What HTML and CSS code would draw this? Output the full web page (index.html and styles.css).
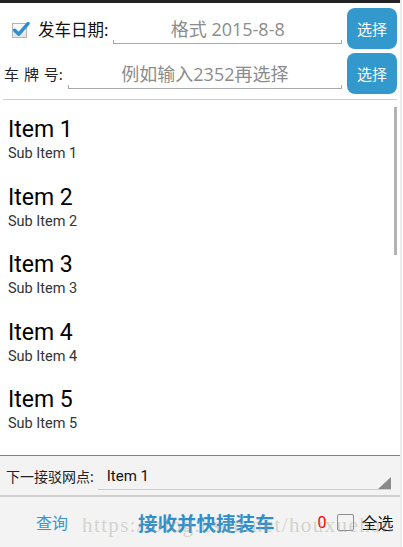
FILE: index.html
```html
<!DOCTYPE html>
<html lang="zh-CN">
<head>
    <meta charset="UTF-8">
    <meta name="viewport" content="width=device-width, initial-scale=1.0">
    <title>快捷装车</title>
    <link rel="stylesheet" href="styles.css">
</head>
<body>
    <div class="screen">
        <div class="statusbar"></div>

        <div class="form-row first-row">
            <svg class="check-icon" width="20" height="20" viewBox="0 0 20 20">
                <defs>
                    <linearGradient id="boxFill" x1="0" y1="0" x2="0" y2="1">
                        <stop offset="0" stop-color="#ffffff"/>
                        <stop offset="1" stop-color="#e2e2e2"/>
                    </linearGradient>
                </defs>
                <rect x="2.5" y="4.5" width="14" height="14" fill="url(#boxFill)" stroke="#b4b4b4" stroke-width="1"/>
                <path d="M4.6 11.2 L8.8 15.2 L18 4.6" fill="none" stroke="#2a8fd3" stroke-width="3.4" stroke-linecap="round" stroke-linejoin="round"/>
            </svg>
            <span class="row-label">发车日期:</span>
            <div class="field">
                <span class="placeholder">格式 2015-8-8</span>
                <div class="field-line"></div>
            </div>
            <button class="pick-btn">选择</button>
        </div>

        <div class="form-row second-row">
            <span class="row-label small">车 牌 号:</span>
            <div class="field">
                <span class="placeholder">例如输入2352再选择</span>
                <div class="field-line"></div>
            </div>
            <button class="pick-btn">选择</button>
        </div>

        <div class="divider"></div>

        <div class="list-wrap">
            <ul class="item-list">
                <li><div class="item-title">Item 1</div><div class="item-sub">Sub Item 1</div></li>
                <li><div class="item-title">Item 2</div><div class="item-sub">Sub Item 2</div></li>
                <li><div class="item-title">Item 3</div><div class="item-sub">Sub Item 3</div></li>
                <li><div class="item-title">Item 4</div><div class="item-sub">Sub Item 4</div></li>
                <li><div class="item-title">Item 5</div><div class="item-sub">Sub Item 5</div></li>
            </ul>
            <div class="scroll-thumb"></div>
        </div>

        <div class="spinner-row">
            <span class="spinner-label">下一接驳网点:</span>
            <div class="spinner">
                <span class="spinner-value">Item 1</span>
                <svg class="spinner-arrow" width="13" height="12" viewBox="0 0 13 12">
                    <polygon points="13,0 13,12 0,12" fill="#8a8a8a"/>
                </svg>
            </div>
        </div>

        <div class="bottom-bar">
            <span class="query-link">查询</span>
            <span class="load-btn">接收并快捷装车</span>
            <span class="count">0</span>
            <span class="select-box"></span>
            <span class="select-all">全选</span>
            <span class="watermark">https://blog.csdn.net/houxuehan</span>
        </div>
    </div>
</body>
</html>
```

FILE: styles.css
```css
body {
    margin: 0;
    background: #fff;
    font-family: "Noto Sans", "Noto Sans CJK SC", sans-serif;
}
.screen {
    width: 400px;
    height: 547px;
    border-right: 2px solid #ececec;
    overflow: hidden;
}
.statusbar {
    height: 3px;
    background: #222;
}

/* top form */
.form-row {
    display: flex;
    align-items: center;
    height: 41px;
}
.first-row {
    margin-top: 5px;
}
.second-row {
    margin-top: 4px;
}
.check-icon {
    margin-left: 10px;
    flex-shrink: 0;
}
.row-label {
    margin-left: 8px;
    font-size: 16.5px;
    color: #111;
    white-space: nowrap;
}
.row-label.small {
    margin-left: 4px;
    font-size: 15px;
    word-spacing: 1px;
    color: #222;
}
.field {
    flex: 1;
    align-self: flex-start;
    display: flex;
    flex-direction: column;
    margin: 10px 5px 0 5px;
}
.placeholder {
    text-align: center;
    font-family: "Open Sans", "Noto Sans CJK SC", sans-serif;
    font-size: 18px;
    line-height: 22px;
    color: #8c8c8c;
    white-space: nowrap;
}
.field-line {
    height: 3px;
    border: 1px solid #aaa;
    border-top: none;
}
.pick-btn {
    width: 50px;
    height: 41px;
    margin-right: 3px;
    padding: 0;
    border: none;
    border-radius: 8px;
    background: #3399cc;
    color: #fff;
    font-family: "Noto Sans CJK SC", sans-serif;
    font-size: 15px;
}
.divider {
    height: 1px;
    margin: 5px 3px 0;
    background: #cccccc;
}

/* list */
.list-wrap {
    position: relative;
    height: 355px;
    overflow: hidden;
}
.item-list {
    list-style: none;
    margin: 0;
    padding: 0;
}
.item-list li {
    height: 67.5px;
    box-sizing: border-box;
    padding: 16px 0 0 8px;
    font-family: Roboto, sans-serif;
}
.item-title {
    font-size: 23px;
    line-height: 27px;
    color: #000;
}
.item-sub {
    font-size: 14.5px;
    line-height: 21px;
    color: #333;
}
.scroll-thumb {
    position: absolute;
    top: 7px;
    right: 3px;
    width: 3px;
    height: 148px;
    background: #b3b3b3;
}

/* spinner */
.spinner-row {
    display: flex;
    align-items: stretch;
    height: 39px;
    border-top: 1px solid #2f9bd6;
    border-bottom: 2px solid #cfcfcf;
    background: #f3f3f3;
}
.spinner-label {
    align-self: center;
    margin-left: 6px;
    font-size: 14px;
    color: #222;
    white-space: nowrap;
}
.spinner {
    flex: 1;
    display: flex;
    align-items: center;
    margin: 2px 9px 5px 4px;
    padding-top: 4px;
    border-bottom: 1px solid #cdcdcd;
}
.spinner-value {
    flex: 1;
    padding-left: 9px;
    font-family: Roboto, sans-serif;
    font-size: 15px;
    color: #111;
}
.spinner-arrow {
    align-self: flex-end;
}

/* bottom bar */
.bottom-bar {
    position: relative;
    display: flex;
    align-items: center;
    height: 50px;
    background: #f3f3f3;
    font-family: "Noto Sans CJK SC", sans-serif;
}
.query-link {
    margin-left: 36px;
    font-size: 16px;
    color: #3a96cf;
}
.load-btn {
    margin-left: 70px;
    font-size: 19.5px;
    font-weight: 700;
    color: #2f8fcc;
    white-space: nowrap;
}
.count {
    margin-left: 43px;
    font-family: Roboto, sans-serif;
    font-size: 16px;
    color: #ff0000;
}
.select-box {
    width: 15px;
    height: 15px;
    margin-left: 10px;
    border: 1px solid #8e8e8e;
    border-radius: 2px;
}
.select-all {
    margin-left: 8px;
    font-size: 16px;
    color: #111;
}
.watermark {
    position: absolute;
    left: 82px;
    top: 18px;
    font-family: "Liberation Serif", serif;
    font-size: 21px;
    line-height: 21px;
    letter-spacing: 1.4px;
    color: rgba(160, 160, 150, 0.4);
    white-space: nowrap;
    pointer-events: none;
}
```
